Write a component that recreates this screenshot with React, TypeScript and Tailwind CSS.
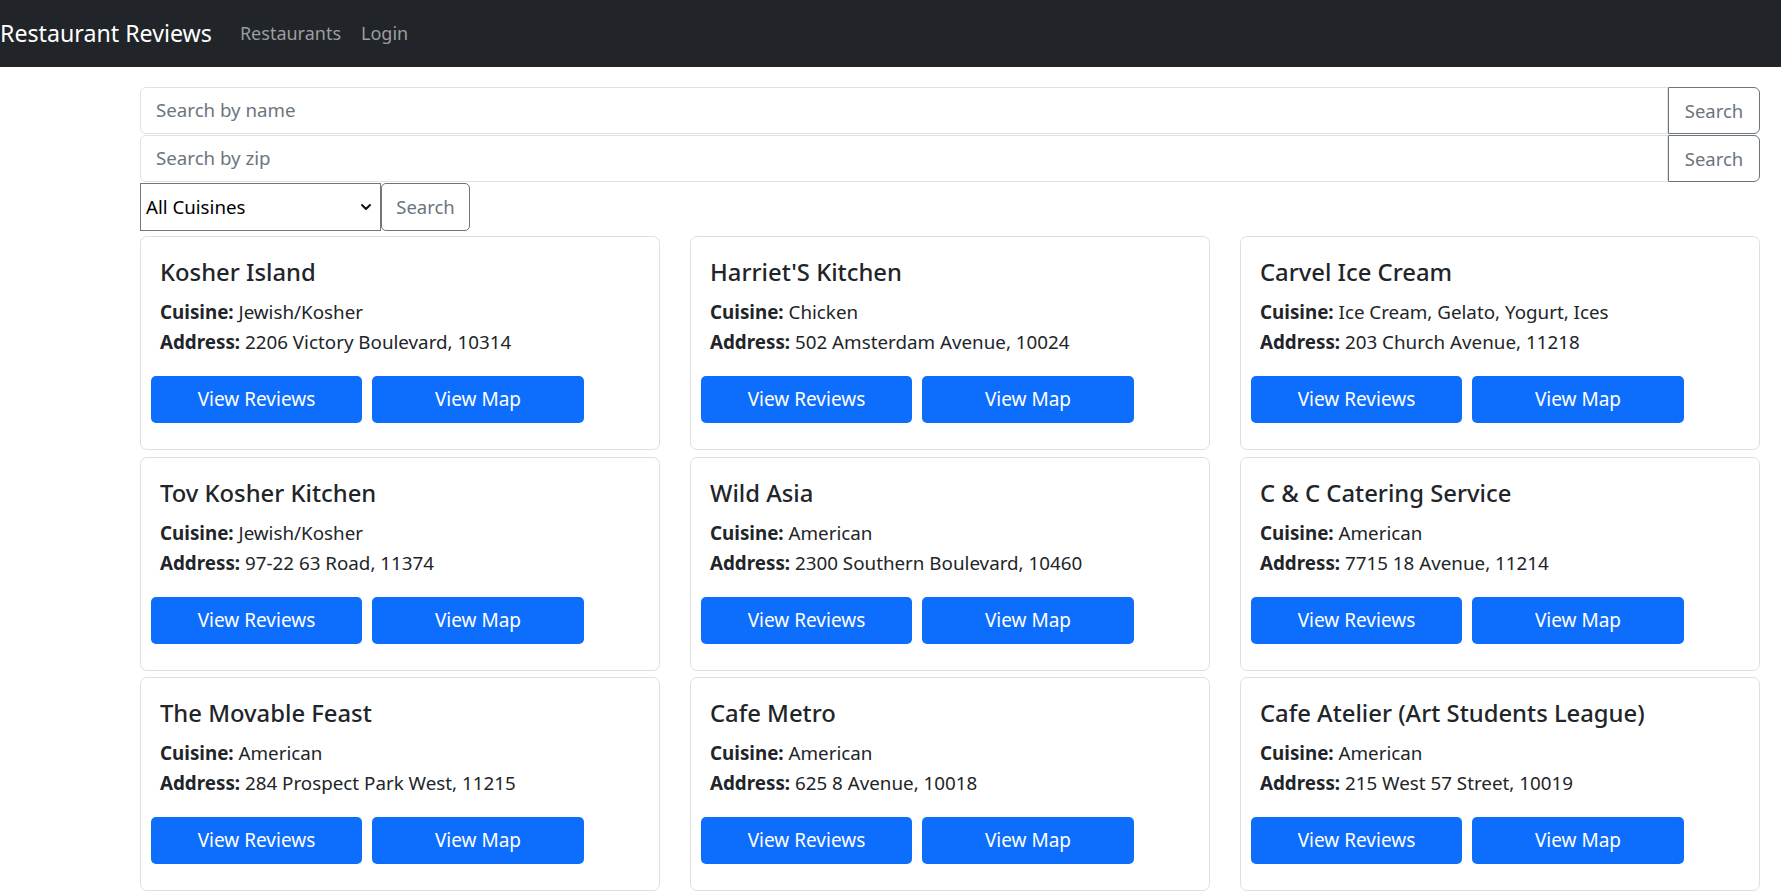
import React from "react";

const restaurants = [
  { name: "Kosher Island", cuisine: "Jewish/Kosher", address: "2206 Victory Boulevard, 10314" },
  { name: "Harriet'S Kitchen", cuisine: "Chicken", address: "502 Amsterdam Avenue, 10024" },
  { name: "Carvel Ice Cream", cuisine: "Ice Cream, Gelato, Yogurt, Ices", address: "203 Church Avenue, 11218" },
  { name: "Tov Kosher Kitchen", cuisine: "Jewish/Kosher", address: "97-22 63 Road, 11374" },
  { name: "Wild Asia", cuisine: "American", address: "2300 Southern Boulevard, 10460" },
  { name: "C & C Catering Service", cuisine: "American", address: "7715 18 Avenue, 11214" },
  { name: "The Movable Feast", cuisine: "American", address: "284 Prospect Park West, 11215" },
  { name: "Cafe Metro", cuisine: "American", address: "625 8 Avenue, 10018" },
  { name: "Cafe Atelier (Art Students League)", cuisine: "American", address: "215 West 57 Street, 10019" },
];

const SearchRow = ({ placeholder }: { placeholder: string }) => (
  <div className="flex h-[47px]">
    <input
      placeholder={placeholder}
      className="flex-1 border border-[#dee2e6] rounded-l-[6px] px-[15px] text-[18.7px] text-[#212529] placeholder:text-[#6c757d] outline-none"
    />
    <button className="w-[92px] border border-[#6c757d] rounded-r-[6px] text-[18.5px] text-[#6c757d] bg-white">
      Search
    </button>
  </div>
);

const App = () => {
  return (
    <div className="min-h-screen bg-white font-['Noto_Sans',sans-serif] text-[#212529]">
      <nav className="flex items-center h-[67px] bg-[#212529]">
        <span className="text-[23.2px] text-white mr-[28px]">Restaurant Reviews</span>
        <div className="flex gap-[20px] text-[18px] text-[#9b9d9f]">
          <span>Restaurants</span>
          <span>Login</span>
        </div>
      </nav>

      <div className="ml-[140px] mr-[21px] pt-[20px]">
        <SearchRow placeholder="Search by name" />
        <div className="mt-[1px]">
          <SearchRow placeholder="Search by zip" />
        </div>
        <div className="flex h-[48px] mt-[1px]">
          <div className="relative w-[241px]">
            <select className="appearance-none w-full h-full border border-[#767676] bg-white pl-[5px] text-[18.7px] text-black outline-none">
              <option>All Cuisines</option>
            </select>
            <svg
              className="absolute right-[9px] top-[18px] pointer-events-none"
              width="12"
              height="12"
              viewBox="0 0 12 12"
              fill="none"
              stroke="#111"
              strokeWidth="2"
              strokeLinecap="round"
              strokeLinejoin="round"
            >
              <path d="M2 4l4 4 4-4" />
            </svg>
          </div>
          <button className="w-[89px] border border-[#6c757d] rounded-[5px] text-[18.5px] text-[#6c757d] bg-white">
            Search
          </button>
        </div>

        <div className="grid grid-cols-3 gap-x-[30px] gap-y-[6.5px] mt-[5px]">
          {restaurants.map((r) => (
            <div key={r.name} className="h-[214px] border border-[#dfdfdf] rounded-[7px] px-[10px] pt-[21px]">
              <div className="px-[9px]">
                <h5 className="text-[23.8px] font-medium leading-[28px] mb-[11px]">{r.name}</h5>
                <p className="text-[18.8px] leading-[30px]">
                  <b className="font-bold">Cuisine:</b> {r.cuisine}
                </p>
                <p className="text-[18.8px] leading-[30px]">
                  <b className="font-bold">Address:</b> {r.address}
                </p>
              </div>
              <div className="flex gap-[10px] mt-[19px]">
                <button className="w-[211px] h-[47px] rounded-[5px] bg-[#0d6efd] text-white text-[19px]">
                  View Reviews
                </button>
                <button className="w-[212px] h-[47px] rounded-[5px] bg-[#0d6efd] text-white text-[19px]">
                  View Map
                </button>
              </div>
            </div>
          ))}
        </div>
      </div>
    </div>
  );
};

export default App;
